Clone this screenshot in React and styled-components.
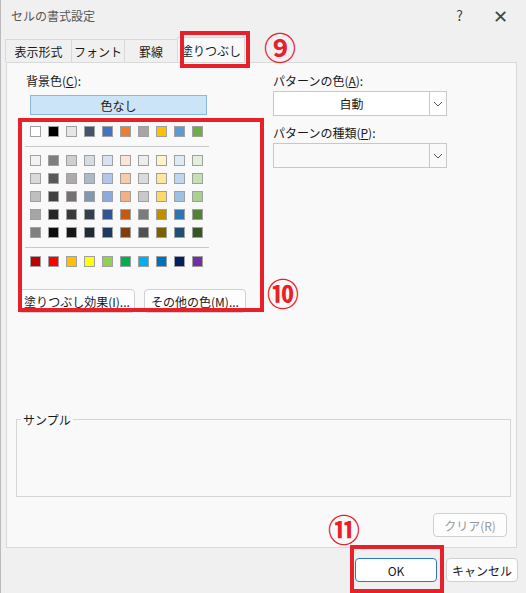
import React from "react";
import styled, { createGlobalStyle } from "styled-components";

const G = createGlobalStyle`
  body{margin:0;font-family:"Noto Sans CJK JP","Noto Sans",sans-serif;font-size:12px;color:#1a1a1a;}
`;
const Win = styled.div`position:relative;width:526px;height:593px;background:#f0f0f0;border-left:1px solid #bbb;box-sizing:border-box;overflow:hidden;`;
const Title = styled.div`height:30px;display:flex;align-items:center;padding-left:10px;color:#555;font-size:12px;`;
const TitleBtns = styled.div`margin-left:auto;display:flex;gap:30px;padding-right:18px;color:#444;font-size:14px;align-items:center;`;
const Tabs = styled.div`display:flex;margin:7px 0 0 5px;height:25px;align-items:flex-end;`;
const Tab = styled.div`height:${p=>p.sel?25:23}px;width:${p=>p.w}px;justify-content:center;white-space:nowrap;display:flex;align-items:center;border:1px solid #d9d9d9;border-bottom:none;margin-left:-1px;background:${p=>p.sel?"#f9f9f9":"#f0f0f0"};font-size:12px;box-sizing:border-box;`;
const Panel = styled.div`margin:0 9px 0 5px;height:486px;background:#f9f9f9;border:1px solid #d9d9d9;box-sizing:border-box;padding:10px 9px 0 9px;display:flex;flex-direction:column;`;
const Top = styled.div`display:flex;`;
const Left = styled.div`width:257px;flex-shrink:0;`;
const Right = styled.div`flex:1;`;
const Label = styled.div`font-size:12px;height:16px;line-height:16px;margin-left:${p=>p.ml||0}px;`;
const NoColor = styled.div`margin:6px 0 0 14px;width:177px;height:20px;box-sizing:border-box;background:#cce4f7;border:1px solid #8ab8e0;display:flex;justify-content:center;align-items:center;`;
const Palette = styled.div`margin:11px 0 0 14px;display:flex;flex-direction:column;`;
const Row = styled.div`display:flex;gap:7px;height:11px;margin-bottom:${p=>p.mb||7}px;`;
const Sw = styled.div`width:11px;height:11px;box-sizing:border-box;border:1px solid #a0a0a0;background:${p=>p.c};`;
const Sep = styled.div`width:184px;height:1px;background:#c8c8c8;margin:0 0 8px -5px;`;
const Btns = styled.div`display:flex;gap:9px;margin:15px 0 0 3px;`;
const Btn = styled.div`height:24px;flex-shrink:0;white-space:nowrap;box-sizing:border-box;border:1px solid #d0d0d0;border-radius:4px;background:#fdfdfd;display:flex;align-items:center;justify-content:center;font-size:12px;width:${p=>p.w}px;color:${p=>p.dis?"#999":"#1a1a1a"};`;
const Combo = styled.div`margin-top:2px;margin-bottom:9px;width:174px;height:25px;box-sizing:border-box;border:1px solid #c8c8c8;background:${p=>p.dis?"#f9f9f9":"#fff"};display:flex;`;
const ComboText = styled.div`flex:1;display:flex;align-items:center;justify-content:center;`;
const ComboArrow = styled.div`width:16px;border-left:1px solid #c8c8c8;display:flex;align-items:center;justify-content:center;`;
const Sample = styled.fieldset`margin:auto 0 0 0;width:495px;height:86px;box-sizing:border-box;border:1px solid #d6d6d6;padding:0;`;
const Legend = styled.legend`margin-left:4px;padding:0 2px;font-size:12px;`;
const ClearRow = styled.div`display:flex;justify-content:flex-end;margin:16px 0 10px 0;`;
const Footer = styled.div`display:flex;justify-content:flex-end;gap:9px;padding:10px 8px 0 0;`;
const Primary = styled(Btn)`border:1px solid #2e75c8;background:#fff;`;
const Box = styled.div`position:absolute;border:4px solid #e8202a;left:${p=>p.x}px;top:${p=>p.y}px;width:${p=>p.w}px;height:${p=>p.h}px;box-sizing:border-box;`;
const Num = styled.div`position:absolute;left:${p=>p.x}px;top:${p=>p.y}px;color:#e8202a;font-size:32px;font-weight:bold;line-height:1;font-family:"Noto Sans CJK JP",sans-serif;`;

const Arrow = () => (<svg width="10" height="6" viewBox="0 0 10 6"><path d="M1 1l4 4 4-4" fill="none" stroke="#555" strokeWidth="1"/></svg>);

const row1=["#ffffff","#000000","#e7e6e6","#44546a","#4472c4","#ed7d31","#a5a5a5","#ffc000","#5b9bd5","#70ad47"];
const tints=[
["#f2f2f2","#7f7f7f","#d0cece","#d6dce4","#d9e1f2","#fce4d6","#ededed","#fff2cc","#ddebf7","#e2efda"],
["#d9d9d9","#595959","#aeaaaa","#adb9ca","#b4c6e7","#f8cbad","#dbdbdb","#ffe699","#bdd7ee","#c6e0b4"],
["#bfbfbf","#404040","#757171","#8497b0","#8ea9db","#f4b084","#c9c9c9","#ffd966","#9bc2e6","#a9d08e"],
["#a6a6a6","#262626","#3a3838","#333f4f","#2f5597","#c65911","#7b7b7b","#bf8f00","#2e75b6","#548235"],
["#808080","#0d0d0d","#161616","#222b35","#1f3864","#833c0b","#525252","#7f6000","#1f4e78","#375623"]];
const std=["#c00000","#ff0000","#ffc000","#ffff00","#92d050","#00b050","#00b0f0","#0070c0","#002060","#7030a0"];

export default function App(){
  return (<Win><G/>
    <Title>セルの書式設定<TitleBtns><span>?</span><span style={{fontSize:18}}>✕</span></TitleBtns></Title>
    <Tabs><Tab w={67}>表示形式</Tab><Tab w={54}>フォント</Tab><Tab w={54}>罫線</Tab><Tab sel w={68}>塗りつぶし</Tab></Tabs>
    <Panel>
      <Top>
        <Left>
          <Label ml={10}>背景色(<u>C</u>):</Label>
          <NoColor>色なし</NoColor>
          <Palette>
            <Row mb={9}>{row1.map((c,i)=><Sw key={i} c={c}/>)}</Row>
            <Sep/>
            {tints.map((r,j)=><Row key={j} mb={j===4?9:7}>{r.map((c,i)=><Sw key={i} c={c}/>)}</Row>)}
            <Sep/>
            <Row>{std.map((c,i)=><Sw key={i} c={c}/>)}</Row>
          </Palette>
          <Btns><Btn w={116}>塗りつぶし効果(<u>I</u>)...</Btn><Btn w={102}>その他の色(<u>M</u>)...</Btn></Btns>
        </Left>
        <Right>
          <Label>パターンの色(<u>A</u>):</Label>
          <Combo><ComboText>自動</ComboText><ComboArrow><Arrow/></ComboArrow></Combo>
          <Label>パターンの種類(<u>P</u>):</Label>
          <Combo dis><ComboText/><ComboArrow><Arrow/></ComboArrow></Combo>
        </Right>
      </Top>
      <Sample><Legend>サンプル</Legend></Sample>
      <ClearRow><Btn w={74} dis>クリア(R)</Btn></ClearRow>
    </Panel>
    <Footer><Primary w={82}>OK</Primary><Btn w={72}>キャンセル</Btn></Footer>
    <Box x={179} y={31} w={70} h={37}/>
    <Box x={17} y={118} w={246} h={194}/>
    <Box x={349} y={545} w={94} h={48}/>
    <Num x={263} y={30}>⑨</Num>
    <Num x={266} y={276}>⑩</Num>
    <Num x={327} y={512}>⑪</Num>
  </Win>);
}
